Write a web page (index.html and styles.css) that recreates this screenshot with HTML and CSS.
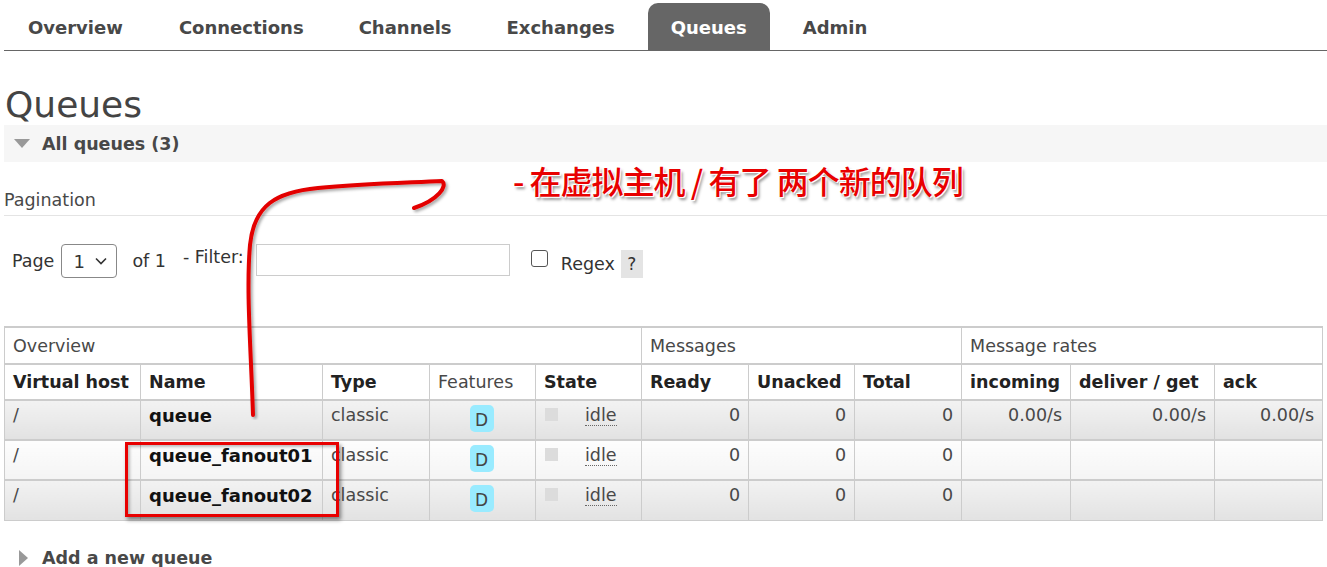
FILE: index.html
```html
<!DOCTYPE html>
<html>
<head>
<meta charset="utf-8">
<link rel="stylesheet" href="styles.css">
</head>
<body>
<div class="page">
  <nav class="tabs">
    <a class="tab">Overview</a>
    <a class="tab">Connections</a>
    <a class="tab">Channels</a>
    <a class="tab">Exchanges</a>
    <a class="tab active">Queues</a>
    <a class="tab">Admin</a>
  </nav>

  <h1 class="title">Queues</h1>
  <div class="section-head">
    <span class="tri-down"></span>
    <span class="section-title">All queues (3)</span>
  </div>

  <div class="pagination-label">Pagination</div>

  <div class="filter-row">
    <span class="lbl">Page</span>
    <span class="select">1 <svg width="14" height="10" viewBox="0 0 14 10"><path d="M2 2.5 L7 7.5 L12 2.5" fill="none" stroke="#333" stroke-width="1.6"/></svg></span>
    <span class="lbl of">of 1</span>
    <span class="lbl filter">- Filter:</span>
    <span class="input"></span>
    <span class="checkbox"></span>
    <span class="lbl regex">Regex</span>
    <span class="help">?</span>
  </div>

  <table class="list">
    <colgroup>
      <col style="width:136px"><col style="width:182px"><col style="width:107px"><col style="width:106px"><col style="width:106px">
      <col style="width:107px"><col style="width:106px"><col style="width:107px">
      <col style="width:109px"><col style="width:144px"><col style="width:108px">
    </colgroup>
    <tr class="group">
      <th colspan="5">Overview</th>
      <th colspan="3">Messages</th>
      <th colspan="3">Message rates</th>
    </tr>
    <tr class="cols">
      <th>Virtual host</th><th>Name</th><th>Type</th><th class="normal">Features</th><th>State</th>
      <th>Ready</th><th>Unacked</th><th>Total</th>
      <th>incoming</th><th>deliver / get</th><th>ack</th>
    </tr>
    <tr class="alt1">
      <td>/</td><td class="name">queue</td><td>classic</td><td class="c"><span class="badge">D</span></td>
      <td><span class="state"><span class="sq"></span><span class="idle">idle</span></span></td>
      <td class="r">0</td><td class="r">0</td><td class="r">0</td>
      <td class="r">0.00/s</td><td class="r">0.00/s</td><td class="r">0.00/s</td>
    </tr>
    <tr class="alt2">
      <td>/</td><td class="name">queue_fanout01</td><td>classic</td><td class="c"><span class="badge">D</span></td>
      <td><span class="state"><span class="sq"></span><span class="idle">idle</span></span></td>
      <td class="r">0</td><td class="r">0</td><td class="r">0</td>
      <td></td><td></td><td></td>
    </tr>
    <tr class="alt1">
      <td>/</td><td class="name">queue_fanout02</td><td>classic</td><td class="c"><span class="badge">D</span></td>
      <td><span class="state"><span class="sq"></span><span class="idle">idle</span></span></td>
      <td class="r">0</td><td class="r">0</td><td class="r">0</td>
      <td></td><td></td><td></td>
    </tr>
  </table>

  <div class="add-queue">
    <span class="tri-right"></span>
    <span class="section-title">Add a new queue</span>
  </div>

  <svg class="arrow" width="460" height="260" viewBox="0 0 460 260">
    <defs>
      <filter id="sh" x="-10%" y="-10%" width="130%" height="130%">
        <feDropShadow dx="2" dy="2" stdDeviation="1.5" flood-color="#000" flood-opacity="0.35"/>
      </filter>
    </defs>
    <path d="M253 415 C 251 350, 246 290, 250 245 C 254 205, 276 192, 318 188 C 360 184, 400 183, 442 181 C 448 186, 438 200, 414 208"
          transform="translate(0,-160)" fill="none" stroke="#e30000" stroke-width="4" stroke-linecap="round" stroke-linejoin="round" filter="url(#sh)"/>
    <path d="M408 181 L 442 181" transform="translate(0,-160)" fill="none" stroke="#e30000" stroke-width="4" stroke-linecap="round" filter="url(#sh)"/>
  </svg>
  <div class="note">- 在虚拟主机 / 有了 两个新的队列</div>
  <div class="highlight"></div>
</div>
</body>
</html>
```

FILE: styles.css
```css
html, body {
  margin: 0;
  padding: 0;
  background: #fff;
}
body {
  font-family: "DejaVu Sans", Verdana, sans-serif;
  color: #484848;
  overflow: hidden;
}
.page {
  position: relative;
  width: 1327px;
  height: 567px;
}
.tabs {
  display: flex;
  margin-left: 4px;
  padding-top: 3px;
  height: 47px;
  border-bottom: 1px solid #666;
}
.tab {
  display: flex;
  align-items: center;
  font-weight: bold;
  font-size: 18px;
  color: #484848;
  height: 47px;
  box-sizing: border-box;
  padding-top: 1px;
}
.tab:nth-child(1) { padding-left: 24px; padding-right: 26px; }
.tab:nth-child(2) { padding-left: 30px; padding-right: 27px; }
.tab:nth-child(3) { padding-left: 28px; padding-right: 27px; }
.tab:nth-child(4) { padding-left: 28px; padding-right: 33px; }
.tab.active {
  background: #666;
  color: #fff;
  border-radius: 10px 10px 0 0;
  width: 122px;
  justify-content: center;
  padding: 1px 0 0 0;
}
.tab:nth-child(6) { padding-left: 33px; }
.title {
  font-size: 36px;
  font-weight: normal;
  color: #444;
  margin: 33px 0 0 5px;
  line-height: 41px;
  height: 41px;
}
.section-head {
  display: flex;
  align-items: center;
  height: 37px;
  margin-left: 4px;
  background: #f6f6f6;
}
.tri-down {
  width: 0; height: 0;
  border-left: 8px solid transparent;
  border-right: 8px solid transparent;
  border-top: 9px solid #999;
  margin-left: 10px;
  margin-right: 12px;
}
.section-title {
  font-weight: bold;
  font-size: 17.5px;
  color: #484848;
}
.pagination-label {
  margin: 28px 0 0 4px;
  font-size: 17.5px;
  line-height: 20px;
  color: #484848;
  padding-bottom: 5px;
  border-bottom: 1px solid #e4e4e4;
}
.filter-row {
  display: flex;
  align-items: center;
  margin: 28px 0 0 12px;
  height: 34px;
  font-size: 17.5px;
}
.lbl { color: #333; }
.select {
  display: inline-flex;
  align-items: center;
  justify-content: space-between;
  box-sizing: border-box;
  width: 56px;
  height: 34px;
  border: 1px solid #888;
  border-radius: 4px;
  margin-left: 7px;
  padding: 0 8px 0 11px;
  font-size: 18px;
  color: #333;
}
.of { margin-left: 15px; }
.filter { margin-left: 17px; margin-top: -8px; }
.input {
  width: 254px;
  height: 32px;
  border: 1px solid #ccc;
  box-sizing: border-box;
  margin-left: 12px;
  margin-top: -2px;
}
.checkbox {
  width: 15px; height: 15px;
  border: 1px solid #555;
  border-radius: 3px;
  margin-left: 21px;
  margin-top: -6px;
}
.regex { margin-left: 13px; margin-top: 5px; }
.help {
  display: flex;
  align-items: center;
  justify-content: center;
  width: 22px;
  height: 28px;
  background: #e4e4e4;
  margin-left: 6px;
  margin-top: 6px;
  font-size: 17px;
  color: #333;
}
table.list {
  margin: 48px 0 0 4px;
  border-collapse: collapse;
  table-layout: fixed;
  width: 1318px;
  font-size: 17.5px;
}
table.list th, table.list td {
  border: 1px solid #ccc;
  border-top: 2px solid #ccc;
  padding: 0 8px;
  text-align: left;
  color: #484848;
  white-space: nowrap;
  overflow: visible;
}
tr.group th {
  font-weight: normal;
  height: 35px;
  background: #fff;
}
tr.cols th {
  height: 34px;
  font-weight: bold;
  color: #222;
}
tr.cols th.normal { font-weight: normal; color: #484848; }
table.list td {
  height: 40px;
  vertical-align: top;
  padding-top: 4px;
  box-sizing: border-box;
}
tr.alt1 td { background: linear-gradient(#f2f2f2, #e2e2e2); }
tr.alt2 td { background: linear-gradient(#fdfdfd, #f4f4f4); }
td.name { font-weight: bold; color: #111 !important; font-size: 18px; padding-left: 6px; }
td.r { text-align: right !important; }
td.c { text-align: center !important; }
.badge {
  display: inline-block;
  width: 24px;
  height: 27px;
  line-height: 31px;
  background: #99ebff;
  border-radius: 5px;
  font-size: 17px;
  color: #444;
  margin-left: -2px;
}
.state { display: flex; align-items: flex-start; }
.sq {
  width: 13px; height: 13px;
  background: #dcdcdc;
  margin-top: 3px;
  margin-left: 1px;
  margin-right: 27px;
}
.idle {
  border-bottom: 1px dotted #666;
  line-height: 20px;
}
.add-queue {
  display: flex;
  align-items: center;
  margin: 27px 0 0 19px;
}
.tri-right {
  width: 0; height: 0;
  border-top: 8px solid transparent;
  border-bottom: 8px solid transparent;
  border-left: 9px solid #999;
  margin-right: 14px;
}
.arrow {
  position: absolute;
  left: 0;
  top: 160px;
}
.note {
  position: absolute;
  left: 513px;
  top: 157px;
  font-family: "Noto Sans CJK SC", sans-serif;
  font-size: 32px;
  font-weight: 500;
  color: #e80000;
  letter-spacing: -1px;
  text-shadow: 0 0 2px #fff, 1px 1px 0 #fff, -1px -1px 0 #fff, 2px 3px 3px rgba(0,0,0,0.45);
}
.highlight {
  position: absolute;
  left: 125px;
  top: 442px;
  width: 208px;
  height: 69px;
  border: 3px solid #e80000;
  box-shadow: 2px 3px 4px rgba(0,0,0,0.45), inset 2px 2px 3px rgba(0,0,0,0.25);
}
```
